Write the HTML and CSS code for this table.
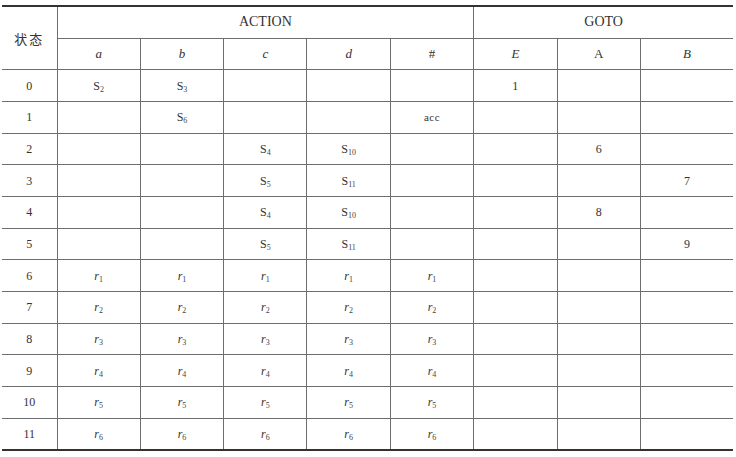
FILE: index.html
```html
<!DOCTYPE html>
<html lang="en">
<head>
<meta charset="utf-8">
<title>LR分析表</title>
<link rel="stylesheet" href="styles.css">
</head>
<body>
<table class="lr">
  <colgroup>
    <col class="c-state">
    <col class="c-mid"><col class="c-mid"><col class="c-mid"><col class="c-mid"><col class="c-mid">
    <col class="c-mid"><col class="c-mid">
    <col class="c-last">
  </colgroup>
  <thead>
    <tr class="h1">
      <th rowspan="2" class="state-h" lang="zh">状态</th>
      <th colspan="5" class="group">ACTION</th>
      <th colspan="3" class="group">GOTO</th>
    </tr>
    <tr class="h2">
      <th><i>a</i></th><th><i>b</i></th><th><i>c</i></th><th><i>d</i></th><th class="sharp">#</th>
      <th><i>E</i></th><th>A</th><th><i>B</i></th>
    </tr>
  </thead>
  <tbody>
    <tr><td>0</td><td>S<sub>2</sub></td><td>S<sub>3</sub></td><td></td><td></td><td></td><td>1</td><td></td><td></td></tr>
    <tr><td>1</td><td></td><td>S<sub>6</sub></td><td></td><td></td><td class="acc">acc</td><td></td><td></td><td></td></tr>
    <tr><td>2</td><td></td><td></td><td>S<sub>4</sub></td><td>S<sub>10</sub></td><td></td><td></td><td>6</td><td></td></tr>
    <tr><td>3</td><td></td><td></td><td>S<sub>5</sub></td><td>S<sub>11</sub></td><td></td><td></td><td></td><td>7</td></tr>
    <tr><td>4</td><td></td><td></td><td>S<sub>4</sub></td><td>S<sub>10</sub></td><td></td><td></td><td>8</td><td></td></tr>
    <tr><td>5</td><td></td><td></td><td>S<sub>5</sub></td><td>S<sub>11</sub></td><td></td><td></td><td></td><td>9</td></tr>
    <tr><td>6</td><td><i>r</i><sub>1</sub></td><td><i>r</i><sub>1</sub></td><td><i>r</i><sub>1</sub></td><td><i>r</i><sub>1</sub></td><td><i>r</i><sub>1</sub></td><td></td><td></td><td></td></tr>
    <tr><td>7</td><td><i>r</i><sub>2</sub></td><td><i>r</i><sub>2</sub></td><td><i>r</i><sub>2</sub></td><td><i>r</i><sub>2</sub></td><td><i>r</i><sub>2</sub></td><td></td><td></td><td></td></tr>
    <tr><td>8</td><td><i>r</i><sub>3</sub></td><td><i>r</i><sub>3</sub></td><td><i>r</i><sub>3</sub></td><td><i>r</i><sub>3</sub></td><td><i>r</i><sub>3</sub></td><td></td><td></td><td></td></tr>
    <tr><td>9</td><td><i>r</i><sub>4</sub></td><td><i>r</i><sub>4</sub></td><td><i>r</i><sub>4</sub></td><td><i>r</i><sub>4</sub></td><td><i>r</i><sub>4</sub></td><td></td><td></td><td></td></tr>
    <tr><td>10</td><td><i>r</i><sub>5</sub></td><td><i>r</i><sub>5</sub></td><td><i>r</i><sub>5</sub></td><td><i>r</i><sub>5</sub></td><td><i>r</i><sub>5</sub></td><td></td><td></td><td></td></tr>
    <tr><td>11</td><td><i>r</i><sub>6</sub></td><td><i>r</i><sub>6</sub></td><td><i>r</i><sub>6</sub></td><td><i>r</i><sub>6</sub></td><td><i>r</i><sub>6</sub></td><td></td><td></td><td></td></tr>
  </tbody>
</table>
</body>
</html>
```

FILE: styles.css
```css
html, body {
  margin: 0;
  padding: 0;
  background: #ffffff;
}

body {
  padding: 5px 0 0 2px;
  font-family: "Liberation Serif", "Times New Roman", serif;
  color: #333333;
}

.lr {
  width: 731px;
  table-layout: fixed;
  border-collapse: collapse;
  border-top: 2px solid #333333;
  border-bottom: 2px solid #333333;
  font-family: "Liberation Serif", "Times New Roman", serif;
}

.c-state { width: 55px; }
.c-mid { width: 83.33px; }
.c-last { width: 92.7px; }

.lr th,
.lr td {
  height: 30.66px;
  padding: 0;
  text-align: center;
  vertical-align: middle;
  font-weight: normal;
  font-size: 12px;
  line-height: 1;
  border: 1px solid #6e6e6e;
}

.lr tr > :first-child { border-left: none; }
.lr tr > :last-child { border-right: none; }
.lr thead .h1 th { border-top: none; }
.lr tbody tr:last-child td { border-bottom: none; }

.lr .group {
  font-size: 14px;
}

.lr .state-h {
  font-family: "Noto Sans CJK SC", sans-serif;
  font-size: 13px;
  letter-spacing: 2px;
  border-left: none;
}

.lr .h2 th {
  font-size: 13px;
}

.lr .h2 th:first-child {
  border-left: 1px solid #6e6e6e;
}

.lr .sharp {
  font-size: 12px;
}

.lr .acc {
  font-size: 11px;
  letter-spacing: 0.5px;
}

.lr sub {
  font-size: 8px;
  vertical-align: -2px;
  line-height: 0;
  color: #444444;
}
```
